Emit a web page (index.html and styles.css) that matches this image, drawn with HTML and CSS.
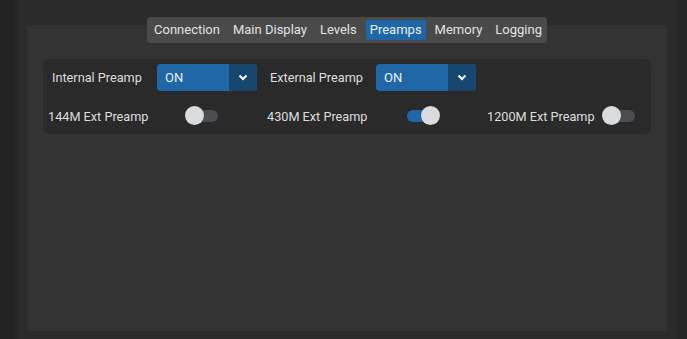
FILE: index.html
```html
<!DOCTYPE html>
<html>
<head>
<meta charset="utf-8">
<link rel="stylesheet" href="styles.css">
</head>
<body>
<div class="app">
  <div class="side-left"></div>
  <div class="main">
    <div class="tabs">
      <div class="tab">Connection</div>
      <div class="tab">Main Display</div>
      <div class="tab">Levels</div>
      <div class="tab active">Preamps</div>
      <div class="tab">Memory</div>
      <div class="tab">Logging</div>
    </div>
    <div class="panel">
      <div class="card">
        <div class="row1">
          <div class="lbl l1">Internal Preamp</div>
          <div class="select">
            <span class="val">ON</span>
            <span class="drop"><svg width="10" height="7" viewBox="0 0 10 7"><path d="M1.5 1.5 L5 5 L8.5 1.5" fill="none" stroke="#fff" stroke-width="2"/></svg></span>
          </div>
          <div class="lbl l2">External Preamp</div>
          <div class="select">
            <span class="val">ON</span>
            <span class="drop"><svg width="10" height="7" viewBox="0 0 10 7"><path d="M1.5 1.5 L5 5 L8.5 1.5" fill="none" stroke="#fff" stroke-width="2"/></svg></span>
          </div>
        </div>
        <div class="row2">
          <div class="lbl c1">144M Ext Preamp</div>
          <div class="toggle"><span class="track"></span><span class="knob"></span></div>
          <div class="lbl c2">430M Ext Preamp</div>
          <div class="toggle on"><span class="track"></span><span class="knob"></span></div>
          <div class="lbl c3">1200M Ext Preamp</div>
          <div class="toggle"><span class="track"></span><span class="knob"></span></div>
        </div>
      </div>
    </div>
  </div>
  <div class="side-right"></div>
</div>
</body>
</html>
```
FILE: styles.css
```css
html, body {
  margin: 0;
  padding: 0;
  background: #2b2b2b;
  width: 687px;
  height: 339px;
  overflow: hidden;
  font-family: Roboto, "Liberation Sans", sans-serif;
  font-size: 13px;
  color: #dedede;
}
.app {
  display: flex;
  height: 339px;
}
.side-left {
  width: 18px;
  flex: none;
  background: linear-gradient(to right, #232323 0, #232323 13px, #262626 13px);
}
.side-right {
  width: 10px;
  flex: none;
  background: #262626;
}
.main {
  flex: 1;
  display: flex;
  flex-direction: column;
  align-items: flex-start;
  padding-top: 17px;
  background: #2b2b2b;
}
.tabs {
  position: relative;
  z-index: 1;
  margin-left: 129px;
  display: flex;
  align-items: center;
  height: 26px;
  width: 400px;
  box-sizing: border-box;
  padding: 0 1px 0 3px;
  background: #4a4a4a;
  border-radius: 4px;
  justify-content: space-between;
}
.tab {
  height: 20px;
  line-height: 20px;
  padding: 0 4px;
  color: #e2e2e2;
  border-radius: 2px;
}
.tab.active {
  background: #1f66a6;
  color: #e8eef5;
}
.panel {
  margin-top: -18px;
  margin-left: 9px;
  width: 640px;
  height: 306px;
  box-sizing: border-box;
  background: #333333;
  border-radius: 4px;
  padding: 34px 16px 0 16px;
}
.card {
  height: 75px;
  background: #2a2a2a;
  border-radius: 7px;
  box-sizing: border-box;
  padding-top: 5px;
}
.lbl {
  font-size: 12.7px;
}
.row1 {
  display: flex;
  align-items: center;
  height: 27px;
  padding-left: 9px;
}
.l1 { width: 105px; }
.l2 { width: 106px; margin-left: 13px; }
.select {
  width: 100px;
  height: 27px;
  display: flex;
  border-radius: 4px;
  overflow: hidden;
  background: #1f67a6;
}
.select .val {
  flex: 1;
  line-height: 27px;
  padding-left: 8px;
  color: #eef3f8;
}
.select .drop {
  width: 28px;
  background: #17476f;
  display: flex;
  align-items: center;
  justify-content: center;
}
.row2 {
  display: flex;
  align-items: center;
  height: 24px;
  margin-top: 13px;
  padding-left: 5px;
}
.c1 { width: 137px; }
.c2 { width: 140px; margin-left: 49px; }
.c3 { width: 115px; margin-left: 47px; }
.toggle {
  position: relative;
  width: 33px;
  height: 20px;
}
.toggle .track {
  position: absolute;
  left: 4px;
  right: 0;
  top: 4px;
  height: 12px;
  border-radius: 6px;
  background: #4a4d52;
}
.toggle .knob {
  position: absolute;
  left: 0;
  top: 0;
  width: 19px;
  height: 19px;
  border-radius: 50%;
  background: #d9dbde;
}
.toggle.on .track {
  left: 0;
  right: 4px;
  background: #2166a8;
}
.toggle.on .knob {
  left: 14px;
}
```
